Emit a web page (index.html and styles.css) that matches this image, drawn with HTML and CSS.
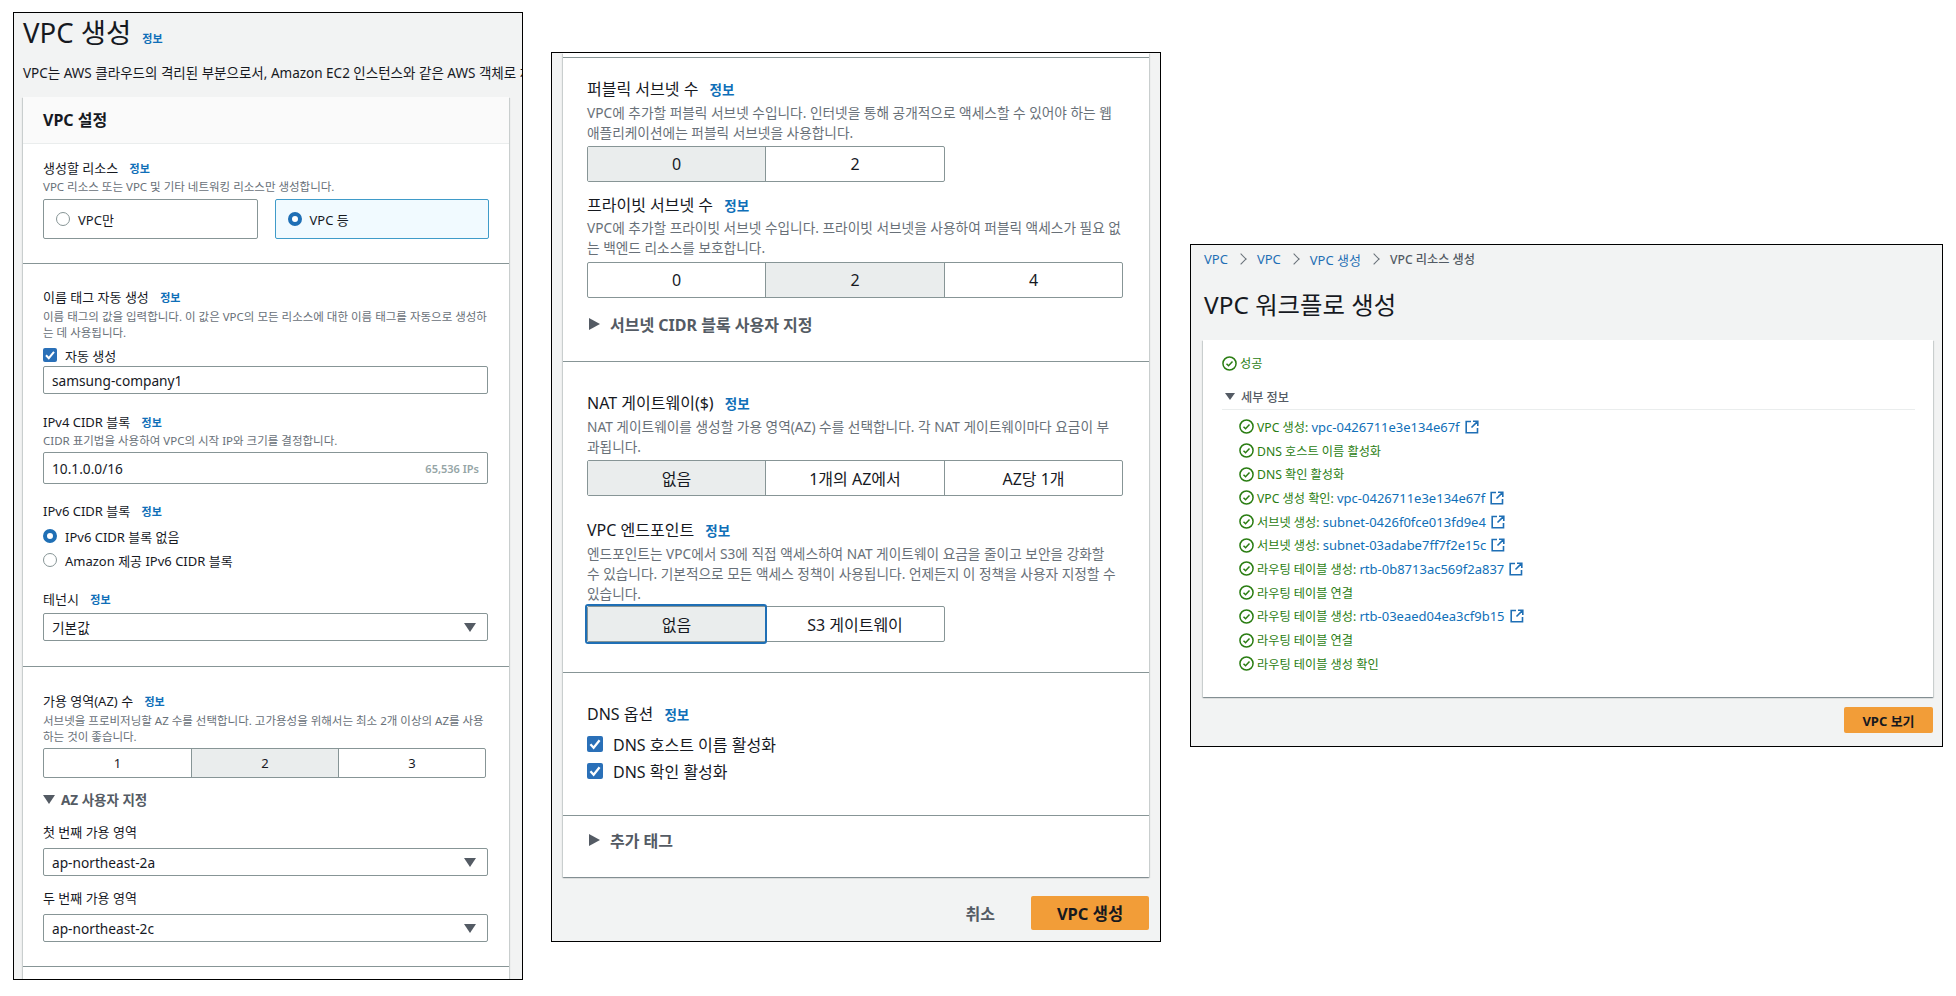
FILE: index.html
```html
<!DOCTYPE html>
<html lang="ko">
<head>
<meta charset="utf-8">
<title>VPC 생성</title>
<link rel="stylesheet" href="styles.css">
</head>
<body>
<svg class="sprite" aria-hidden="true">
  <symbol id="ok" viewBox="0 0 16 16"><circle cx="8" cy="8" r="7" fill="none" stroke="currentColor" stroke-width="1.6"/><path d="M4.8 8.2l2.2 2.2 4.2-4.6" fill="none" stroke="currentColor" stroke-width="1.6"/></symbol>
  <symbol id="ext" viewBox="0 0 14 14"><path d="M6 1.5H1.2v11.3h11.3V8M8 1.2h4.8V6M12.6 1.4L6.5 7.5" fill="none" stroke="currentColor" stroke-width="1.6"/></symbol>
  <symbol id="check" viewBox="0 0 14 14"><path d="M3 7.2l2.8 3L11 3.8" fill="none" stroke="#fff" stroke-width="2"/></symbol>
</svg>
<main class="stage">

  <section class="win win-a">
    <div class="page-title-row"><h1 class="page-title">VPC 생성</h1><a class="info info-title">정보</a></div>
    <p class="lede">VPC는 AWS 클라우드의 격리된 부분으로서, Amazon EC2 인스턴스와 같은 AWS 객체로 채</p>
    <div class="card card-a">
      <div class="card-head">VPC 설정</div>
      <div class="sec s1">
        <div class="lbl">생성할 리소스 <a class="info">정보</a></div>
        <div class="help mt-2">VPC 리소스 또는 VPC 및 기타 네트워킹 리소스만 생성합니다.</div>
        <div class="tiles mt-4">
          <div class="tile"><i class="radio"></i>VPC만</div>
          <div class="tile tile-on"><i class="radio radio-on"></i>VPC 등</div>
        </div>
      </div>
      <div class="sec s2">
        <div class="lbl">이름 태그 자동 생성 <a class="info">정보</a></div>
        <div class="help mt-3">이름 태그의 값을 입력합니다. 이 값은 VPC의 모든 리소스에 대한 이름 태그를 자동으로 생성하는 데 사용됩니다.</div>
        <div class="opt mt-5"><svg class="cb"><use href="#check"/></svg>자동 생성</div>
        <div class="input mt-2">samsung-company1</div>
        <div class="lbl mt-19">IPv4 CIDR 블록 <a class="info">정보</a></div>
        <div class="help mt-2">CIDR 표기법을 사용하여 VPC의 시작 IP와 크기를 결정합니다.</div>
        <div class="input input-tall mt-3">10.1.0.0/16<span class="suffix">65,536 IPs</span></div>
        <div class="lbl mt-18">IPv6 CIDR 블록 <a class="info">정보</a></div>
        <div class="opt opt-tall mt-6"><i class="radio radio-on"></i>IPv6 CIDR 블록 없음</div>
        <div class="opt opt-tall mt-4"><i class="radio"></i>Amazon 제공 IPv6 CIDR 블록</div>
        <div class="lbl mt-20">테넌시 <a class="info">정보</a></div>
        <div class="input select mt-5">기본값<i class="caret"></i></div>
      </div>
      <div class="sec s3">
        <div class="lbl">가용 영역(AZ) 수 <a class="info">정보</a></div>
        <div class="help mt-3">서브넷을 프로비저닝할 AZ 수를 선택합니다. 고가용성을 위해서는 최소 2개 이상의 AZ를 사용하는 것이 좋습니다.</div>
        <div class="seg seg-a mt-3"><span>1</span><span class="on">2</span><span>3</span></div>
        <div class="disc mt-12"><i class="tri-down"></i>AZ 사용자 지정</div>
        <div class="lbl mt-15">첫 번째 가용 영역</div>
        <div class="input select mt-7">ap-northeast-2a<i class="caret"></i></div>
        <div class="lbl mt-13">두 번째 가용 영역</div>
        <div class="input select mt-7">ap-northeast-2c<i class="caret"></i></div>
      </div>
      <div class="rest"></div>
    </div>
  </section>

  <section class="win win-b">
    <div class="card card-b">
      <div class="sec stub"></div>
      <div class="sec b1">
        <div class="lbl">퍼블릭 서브넷 수 <a class="info">정보</a></div>
        <div class="help mt-4">VPC에 추가할 퍼블릭 서브넷 수입니다. 인터넷을 통해 공개적으로 액세스할 수 있어야 하는 웹 애플리케이션에는 퍼블릭 서브넷을 사용합니다.</div>
        <div class="seg seg-two mt-4"><span class="on">0</span><span>2</span></div>
        <div class="lbl mt-13">프라이빗 서브넷 수 <a class="info">정보</a></div>
        <div class="help mt-3">VPC에 추가할 프라이빗 서브넷 수입니다. 프라이빗 서브넷을 사용하여 퍼블릭 액세스가 필요 없는 백엔드 리소스를 보호합니다.</div>
        <div class="seg seg-three mt-4"><span>0</span><span class="on">2</span><span>4</span></div>
        <div class="disc mt-16"><i class="tri-right"></i>서브넷 CIDR 블록 사용자 지정</div>
      </div>
      <div class="sec b2">
        <div class="lbl">NAT 게이트웨이($) <a class="info">정보</a></div>
        <div class="help help-narrow mt-4">NAT 게이트웨이를 생성할 가용 영역(AZ) 수를 선택합니다. 각 NAT 게이트웨이마다 요금이 부과됩니다.</div>
        <div class="seg seg-three mt-4"><span class="on">없음</span><span>1개의 AZ에서</span><span>AZ당 1개</span></div>
        <div class="lbl mt-24">VPC 엔드포인트 <a class="info">정보</a></div>
        <div class="help help-narrow mt-4">엔드포인트는 VPC에서 S3에 직접 액세스하여 NAT 게이트웨이 요금을 줄이고 보안을 강화할 수 있습니다. 기본적으로 모든 액세스 정책이 사용됩니다. 언제든지 이 정책을 사용자 지정할 수 있습니다.</div>
        <div class="seg seg-two mt-3"><span class="on focus">없음</span><span>S3 게이트웨이</span></div>
      </div>
      <div class="sec b3">
        <div class="lbl">DNS 옵션 <a class="info">정보</a></div>
        <div class="opt mt-10"><svg class="cb"><use href="#check"/></svg>DNS 호스트 이름 활성화</div>
        <div class="opt mt-7"><svg class="cb"><use href="#check"/></svg>DNS 확인 활성화</div>
      </div>
      <div class="sec b4">
        <div class="disc"><i class="tri-right"></i>추가 태그</div>
      </div>
    </div>
    <div class="actions">
      <a class="cancel">취소</a>
      <a class="primary">VPC 생성</a>
    </div>
  </section>

  <section class="win win-c">
    <nav class="crumbs">
      <a>VPC</a><b></b><a>VPC</a><b></b><a>VPC 생성</a><b></b><span>VPC 리소스 생성</span>
    </nav>
    <h2 class="flow-title">VPC 워크플로 생성</h2>
    <div class="card card-c">
      <div class="status"><svg class="ok"><use href="#ok"/></svg>성공</div>
      <div class="details"><i class="tri-down tri-small"></i>세부 정보</div>
      <ul class="steps">
        <li><svg class="ok"><use href="#ok"/></svg>VPC 생성: <a>vpc-0426711e3e134e67f</a><svg class="ext"><use href="#ext"/></svg></li>
        <li><svg class="ok"><use href="#ok"/></svg>DNS 호스트 이름 활성화</li>
        <li><svg class="ok"><use href="#ok"/></svg>DNS 확인 활성화</li>
        <li><svg class="ok"><use href="#ok"/></svg>VPC 생성 확인: <a>vpc-0426711e3e134e67f</a><svg class="ext"><use href="#ext"/></svg></li>
        <li><svg class="ok"><use href="#ok"/></svg>서브넷 생성: <a>subnet-0426f0fce013fd9e4</a><svg class="ext"><use href="#ext"/></svg></li>
        <li><svg class="ok"><use href="#ok"/></svg>서브넷 생성: <a>subnet-03adabe7ff7f2e15c</a><svg class="ext"><use href="#ext"/></svg></li>
        <li><svg class="ok"><use href="#ok"/></svg>라우팅 테이블 생성: <a>rtb-0b8713ac569f2a837</a><svg class="ext"><use href="#ext"/></svg></li>
        <li><svg class="ok"><use href="#ok"/></svg>라우팅 테이블 연결</li>
        <li><svg class="ok"><use href="#ok"/></svg>라우팅 테이블 생성: <a>rtb-03eaed04ea3cf9b15</a><svg class="ext"><use href="#ext"/></svg></li>
        <li><svg class="ok"><use href="#ok"/></svg>라우팅 테이블 연결</li>
        <li><svg class="ok"><use href="#ok"/></svg>라우팅 테이블 생성 확인</li>
      </ul>
    </div>
    <div class="view-row"><a class="primary primary-small">VPC 보기</a></div>
  </section>
</main>
</body>
</html>
```
FILE: styles.css
```css
* { box-sizing: border-box; }
html, body { margin: 0; padding: 0; background: #fff; }
body {
  font-family: "Noto Sans", "Noto Sans CJK KR", sans-serif;
  color: #16191f;
}
.sprite { position: absolute; width: 0; height: 0; }
.stage { position: relative; width: 1956px; height: 996px; overflow: hidden; }

/* three screenshots laid on a free canvas */
.win {
  position: absolute;
  background: #f2f3f3;
  border: 1px solid #000;
  overflow: hidden;
}
.win-a { left: 13px; top: 12px; width: 510px; height: 968px; padding: 3px 13px 0 9px; }
.win-b { left: 551px; top: 52px; width: 610px; height: 890px; padding: 0 11px; }
.win-c { left: 1190px; top: 244px; width: 753px; height: 503px; padding: 6px 9px 0 12px; }

.mt-2 { margin-top: 2px; } .mt-3 { margin-top: 3px; } .mt-4 { margin-top: 4px; } .mt-5 { margin-top: 5px; }
.mt-6 { margin-top: 6px; } .mt-7 { margin-top: 7px; } .mt-10 { margin-top: 10px; } .mt-12 { margin-top: 12px; }
.mt-13 { margin-top: 13px; } .mt-15 { margin-top: 15px; } .mt-16 { margin-top: 16px; }
.mt-18 { margin-top: 18px; } .mt-19 { margin-top: 19px; } .mt-20 { margin-top: 20px; } .mt-24 { margin-top: 24px; }

.page-title-row { display: flex; align-items: baseline; height: 34px; }
.page-title { margin: 0; font-size: 27.5px; font-weight: 400; line-height: 34px; }
.info { color: #0f6fb8; font-weight: 700; font-size: 11px; line-height: 1; margin-left: 8px; }
.info-title { margin-left: 11px; }
.lede { margin: 13px 0 0; font-size: 13.5px; line-height: 20px; height: 20px; white-space: nowrap; }

.card { background: #fff; box-shadow: 0 1px 1px rgba(0,28,36,.3), 1px 1px 1px rgba(0,28,36,.12), -1px 1px 1px rgba(0,28,36,.12); }
.card-a { margin-top: 14px; }
.card-head {
  height: 47px; padding: 0 20px 2px; display: flex; align-items: center;
  background: #fafafa; border-bottom: 1px solid #eaeded;
  font-size: 16px; font-weight: 700;
}
.sec { border-bottom: 1px solid #879596; }
.s1 { padding: 15px 20px 24px; }
.s2 { padding: 24px 20px 25px; }
.s3 { padding: 25px 20px 24px; }
.rest { height: 40px; }

.lbl { font-size: 13px; line-height: 18px; color: #16191f; }
.help { font-size: 11.5px; line-height: 16px; color: #687078; }

.tiles { display: flex; gap: 17px; }
.tile {
  flex: 1; height: 40px; display: flex; align-items: center; padding: 0 12px;
  border: 1px solid #879596; border-radius: 2px; font-size: 13px;
}
.tile-on { border-color: #3f9bc9; background: #f1faff; }
.radio {
  flex: none; width: 14px; height: 14px; margin-right: 8px; border-radius: 50%;
  border: 1px solid #879596; background: #fff;
}
.radio-on { border: 4px solid #1f6fb5; }

.opt { display: flex; align-items: center; height: 18px; font-size: 13px; }
.opt-tall { height: 20px; }
.cb { flex: none; width: 14px; height: 14px; margin-right: 8px; background: #2a70b8; border-radius: 2px; }

.input {
  position: relative; display: flex; align-items: center; justify-content: space-between;
  width: 445px; height: 28px; padding: 0 8px;
  border: 1px solid #879596; border-radius: 2px; background: #fff; font-size: 13.7px;
}
.input-tall { height: 32px; }
.suffix { font-size: 11px; color: #95a5a6; font-weight: 600; }
.caret {
  width: 0; height: 0; margin-right: 3px;
  border-left: 6px solid transparent; border-right: 6px solid transparent; border-top: 9px solid #545b64;
}

.seg { display: grid; border: 1px solid #879596; border-radius: 2px; font-size: 13px; }
.seg span { display: flex; align-items: center; justify-content: center; }
.seg span + span { border-left: 1px solid #879596; }
.seg .on { background: #eaeded; }
.seg-a { grid-template-columns: 1fr 1fr 1fr; width: 443px; height: 30px; }
.card-b .seg { font-size: 16px; height: 36px; color: #16191f; }
.seg-two { grid-template-columns: 177px 179px; width: 358px; }
.seg-three { grid-template-columns: 177px 179px 178px; width: 536px; }
.seg .focus { position: relative; }
.seg .focus::after {
  content: ""; position: absolute; left: -3px; top: -3px; right: -2px; bottom: -3px;
  border: 2px solid #1f6fb5; border-radius: 3px;
}

.disc { display: flex; align-items: center; height: 18px; font-size: 13.5px; font-weight: 700; color: #545b64; }
.tri-down {
  width: 0; height: 0; margin-right: 6px;
  border-left: 6px solid transparent; border-right: 6px solid transparent; border-top: 9px solid #545b64;
}
.tri-right {
  width: 0; height: 0; margin: 0 10px 0 2px;
  border-top: 6.5px solid transparent; border-bottom: 6.5px solid transparent; border-left: 11px solid #545b64;
}

/* middle window */
.card-b .lbl { font-size: 16px; line-height: 20px; }
.card-b .info { font-size: 13.5px; margin-left: 7px; }
.card-b .help { font-size: 13.7px; line-height: 19.7px; width: 536px; }
.card-b .help-narrow { width: 530px; }
.card-b .opt { height: 20px; font-size: 16px; }
.card-b .cb { width: 16px; height: 16px; margin-right: 10px; }
.card-b .disc { height: 20px; font-size: 16px; }
.stub { height: 5px; }
.b1 { padding: 21px 24px 27px; }
.b2 { padding: 31px 24px 30px; }
.b3 { padding: 31px 24px 34px; }
.b4 { padding: 14px 24px 27px; border-bottom: 0; }
.actions { display: flex; justify-content: flex-end; align-items: center; margin-top: 19px; }
.cancel { font-size: 16px; font-weight: 700; color: #545b64; margin-right: 36px; }
.primary {
  display: flex; align-items: center; justify-content: center;
  width: 118px; height: 34px; background: #f29d38; border-radius: 2px;
  font-size: 16.5px; font-weight: 700; color: #16191f;
}

/* right window */
.crumbs { display: flex; align-items: center; height: 16px; padding-left: 1px; font-size: 13px; color: #545b64; }
.crumbs a { color: #1f6fb5; }
.crumbs span { font-weight: 500; font-size: 12.2px; }
.crumbs b {
  width: 8px; height: 8px; margin: 0 12px 0 9px;
  border-top: 1px solid #687078; border-right: 1px solid #687078; transform: rotate(45deg);
}
.flow-title { margin: 22px 0 0; padding-left: 1px; font-size: 24.4px; font-weight: 400; line-height: 32px; }
.card-c { margin-top: 19px; height: 357px; padding: 15px 18px 0 19px; font-size: 12.2px; }
.status { display: flex; align-items: center; height: 16px; color: #2a7d12; }
.details {
  display: flex; align-items: center; height: 21px; margin-top: 18px; padding-bottom: 5px;
  border-bottom: 1px solid #eaeded; color: #545b64; font-weight: 500;
}
.tri-small { margin: 0 6px 0 3px; border-left-width: 5px; border-right-width: 5px; border-top-width: 7px; }
.steps { list-style: none; margin: 5px 0 0; padding: 0 0 0 17px; color: #2a7d12; }
.steps li { display: flex; align-items: center; height: 23.7px; white-space: pre; }
.steps a { color: #0f6fb8; font-size: 13px; }
.ok { flex: none; width: 15px; height: 15px; margin-right: 3px; }
.ext { flex: none; width: 14px; height: 14px; margin-left: 5px; color: #1f6fb5; }
.view-row { display: flex; justify-content: flex-end; margin-top: 10px; }
.primary-small { width: 89px; height: 26px; font-size: 13px; }
```
